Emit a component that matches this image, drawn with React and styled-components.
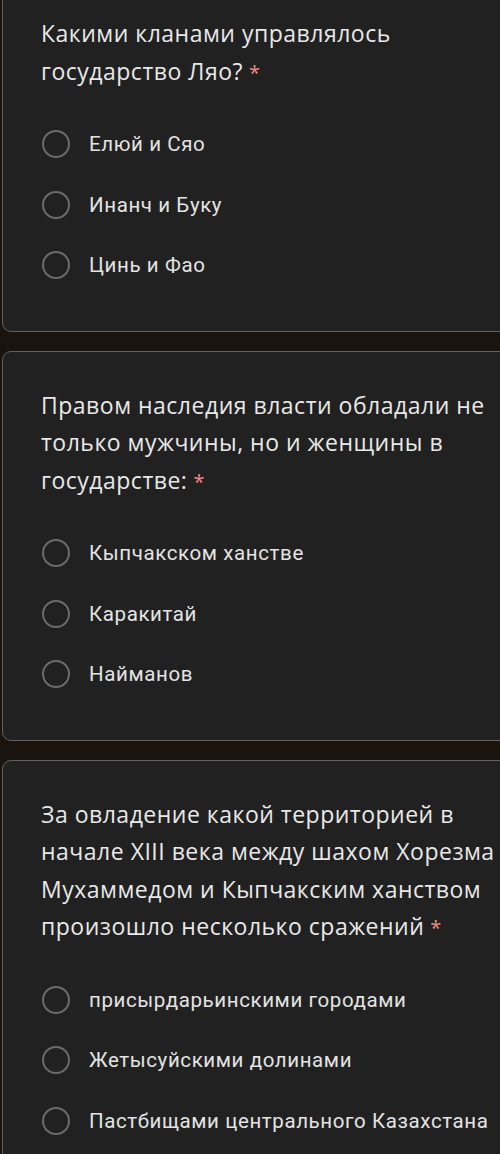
import styled, { createGlobalStyle } from "styled-components"

const GlobalStyle = createGlobalStyle`
html, body {
  margin: 0;
  padding: 0;
  background: #1b130d;
  overflow: hidden;
}
`

const questions = [
    {
        lines: ["Какими кланами управлялось", "государство Ляо?"],
        options: ["Елюй и Сяо", "Инанч и Буку", "Цинь и Фао"],
    },
    {
        lines: ["Правом наследия власти обладали не", "только мужчины, но и женщины в", "государстве:"],
        options: ["Кыпчакском ханстве", "Каракитай", "Найманов"],
    },
    {
        lines: [
            "За овладение какой территорией в",
            "начале XIII века между шахом Хорезма",
            "Мухаммедом и Кыпчакским ханством",
            "произошло несколько сражений",
        ],
        options: ["присырдарьинскими городами", "Жетысуйскими долинами", "Пастбищами центрального Казахстана"],
    },
]

export default function App(){
    return(
        <Page>
            <GlobalStyle/>
            {questions.map((q, i) => (
                <Card key={i} $first={i === 0}>
                    <Title>
                        {q.lines.map((l, j) => (
                            <Line key={j}>
                                {l}
                                {j === q.lines.length - 1 && <Required>*</Required>}
                            </Line>
                        ))}
                    </Title>
                    <Options>
                        {q.options.map((o) => (
                            <Option key={o}>
                                <Radio/>
                                <Label>{o}</Label>
                            </Option>
                        ))}
                    </Options>
                </Card>
            ))}
        </Page>
    );
}

const Page = styled.div`
display: flex;
flex-direction: column;
gap: 19px;
width: 500px;
height: 1154px;
overflow: hidden;
`

const Card = styled.div`
margin-left: 2px;
margin-top: ${p => p.$first ? "-21px" : "0"};
width: 560px;
flex-shrink: 0;
box-sizing: border-box;
background: #212121;
border: 1.5px solid #616161;
border-radius: 9px;
padding: 35px 0 35px 38px;
`

const Title = styled.div`
font-family: 'Open Sans', sans-serif;
font-size: 23px;
letter-spacing: 0.5px;
line-height: 37.5px;
color: #e8e8e8;
`

const Line = styled.div`
white-space: nowrap;
`

const Required = styled.span`
margin-left: 6px;
font-size: 20px;
color: #f28b82;
`

const Options = styled.div`
margin-top: 23px;
display: flex;
flex-direction: column;
`

const Option = styled.div`
height: 60.5px;
display: flex;
align-items: center;
`

const Radio = styled.div`
width: 28px;
height: 28px;
margin-left: 1px;
box-sizing: border-box;
border: 2px solid #6b6b6b;
border-radius: 50%;
flex-shrink: 0;
`

const Label = styled.span`
margin-left: 19px;
font-family: 'Roboto', sans-serif;
font-size: 20.5px;
letter-spacing: 0.6px;
color: #e3e3e3;
white-space: nowrap;
`
